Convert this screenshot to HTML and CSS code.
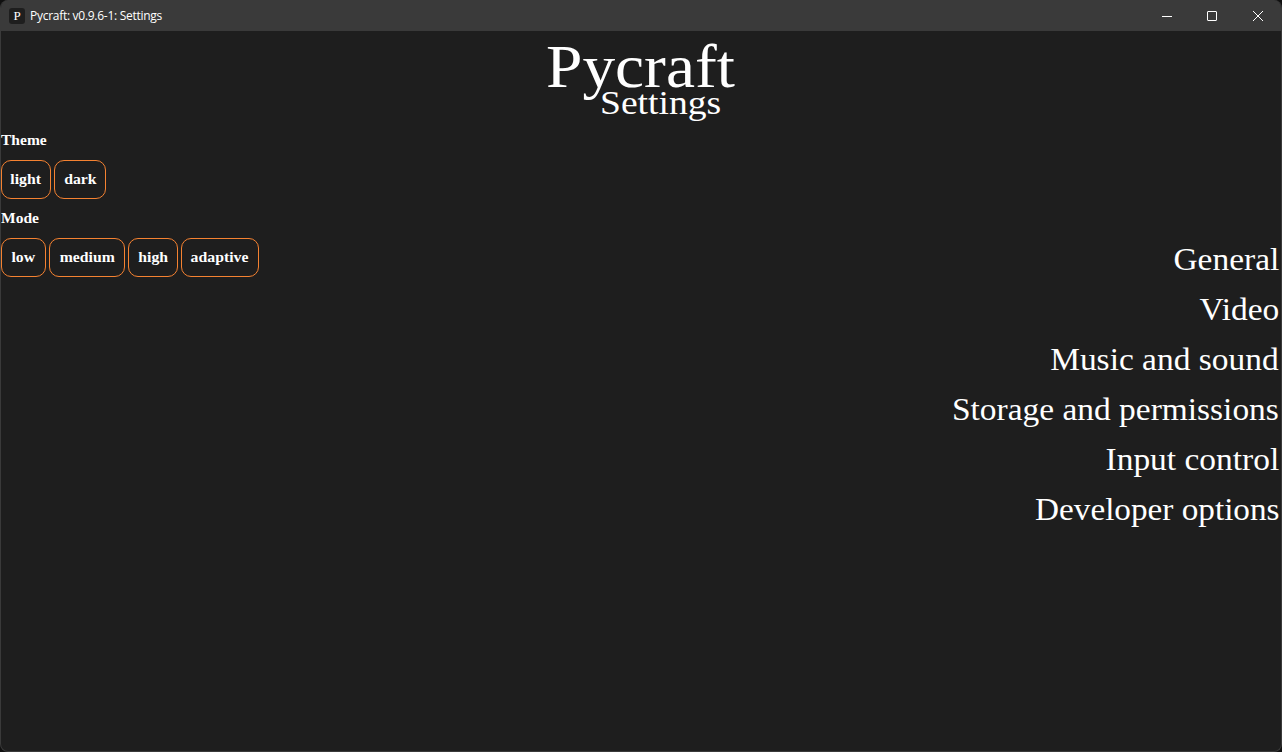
FILE: index.html
```html
<!DOCTYPE html>
<html lang="en">
<head>
<meta charset="utf-8">
<title>Pycraft: v0.9.6-1: Settings</title>
<link rel="stylesheet" href="styles.css">
</head>
<body>
<div class="window">
  <header class="titlebar">
    <span class="app-icon">P</span>
    <span class="caption">Pycraft: v0.9.6-1: Settings</span>
    <svg class="controls" width="138" height="30" viewBox="0 0 138 30" fill="none" stroke="#fff">
      <path d="M19 15.5h10"/>
      <rect x="64.5" y="10.5" width="9" height="9" rx=".5"/>
      <path d="M110 10l10 10M120 10l-10 10"/>
    </svg>
  </header>
  <div class="heading">
    <h1>Pycraft</h1>
    <h2>Settings</h2>
  </div>
  <main class="content">
    <section class="options">
      <h3 class="theme">Theme</h3>
      <div class="row">
        <button class="light"><span>light</span></button>
        <button class="dark"><span>dark</span></button>
      </div>
      <h3 class="mode">Mode</h3>
      <div class="row">
        <button class="low"><span>low</span></button>
        <button class="medium"><span>medium</span></button>
        <button class="high"><span>high</span></button>
        <button class="adaptive"><span>adaptive</span></button>
      </div>
    </section>
    <nav class="menu">
      <a>General</a>
      <a>Video</a>
      <a>Music and sound</a>
      <a>Storage and permissions</a>
      <a>Input control</a>
      <a class="developer">Developer options</a>
    </nav>
  </main>
</div>
</body>
</html>
```
FILE: styles.css
```css
* { box-sizing: border-box; margin: 0; padding: 0; }
body {
  background: #101010;
  color: #fff;
  font-family: "Palatino Linotype", "Book Antiqua", "Liberation Serif", serif;
  overflow: hidden;
}
.window {
  width: 1282px;
  height: 752px;
  border: 1px solid #3a3a3a;
  border-top: 0;
  border-radius: 8px;
  background: #1e1e1e;
  overflow: hidden;
}
.titlebar {
  display: flex;
  align-items: center;
  height: 31px;
  padding-left: 8px;
  background: #3a3a3a;
}
.app-icon {
  width: 16px;
  height: 16px;
  border-radius: 3px;
  background: #1e1e1e;
  font-size: 13px;
  line-height: 15px;
  text-align: center;
}
.caption {
  margin-left: 5px;
  font: 12px/16px "Open Sans", sans-serif;
  letter-spacing: -0.28px;
  white-space: nowrap;
}
.controls { margin-left: auto; }
.heading { height: 99px; padding-top: 1px; }
h1, h2, h3 {
  font-weight: 400;
  white-space: nowrap;
  transform-origin: left;
}
h1 {
  width: 180px;
  height: 52px;
  margin-left: 545px;
  font-size: 62px;
  line-height: 68px;
  transform: scaleX(1.055);
}
h2 {
  width: 112px;
  margin-left: 599px;
  font-size: 34px;
  line-height: 38px;
  transform: scaleX(1.105);
}
.content { display: flex; justify-content: space-between; }
h3 {
  height: 30px;
  font-size: 15px;
  line-height: 20px;
  font-weight: 700;
  transform: scaleX(1.035);
}
.row { display: flex; gap: 3px; height: 39px; margin-bottom: 9px; }
button {
  border: 1px solid #f58231;
  border-radius: 10px;
  background: none;
  color: #fff;
  font: 700 15px/34px "Palatino Linotype", "Book Antiqua", "Liberation Serif", serif;
  white-space: nowrap;
  padding-bottom: 2px;
}
button span { display: inline-block; transform: scaleX(1.05); }
.light { width: 50px; }
.dark { width: 52px; }
.low { width: 45px; }
.medium { width: 76px; }
.high { width: 50px; }
.adaptive { width: 78px; }
.menu {
  display: flex;
  flex-direction: column;
  align-items: flex-end;
  padding: 104px 2px 0 0;
}
.menu a {
  height: 50px;
  font-size: 32px;
  line-height: 50px;
  white-space: nowrap;
  transform: scaleX(1.045);
  transform-origin: right;
}
.menu .developer { transform: scaleX(1.038); }
```
